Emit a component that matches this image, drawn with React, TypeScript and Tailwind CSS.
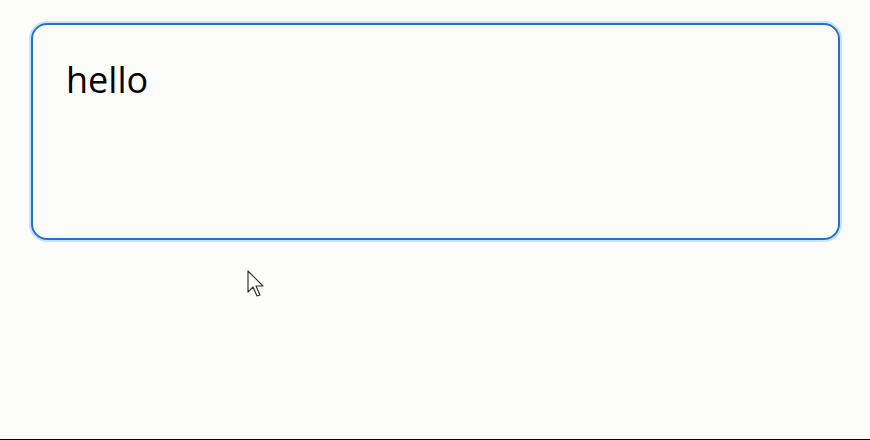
export default function App() {
  return (
    <div className="relative h-[440px] w-[870px] overflow-hidden border-b border-black bg-[#fcfcfb]">
      <div className="pl-[31px] pt-[23px]">
        <div
          className="h-[217px] w-[809px] rounded-[16px] border-2 border-[#1f6fd4] px-[33px] pt-[28px] text-[36px] leading-[1.5] text-black shadow-[0_0_0_2px_#cde1fa]"
          style={{ fontFamily: '"Open Sans", sans-serif' }}
        >
          hello
        </div>
      </div>

      {/* mouse pointer */}
      <svg
        className="absolute left-[247px] top-[270px]"
        width="20"
        height="28"
        viewBox="0 0 20 28"
      >
        <path
          d="M1 1 L1 22 L6 17 L10 26 L13 25 L9 16 L16 16 Z"
          fill="#fff"
          stroke="#333"
          strokeWidth="1.2"
          strokeLinejoin="round"
        />
      </svg>
    </div>
  )
}
